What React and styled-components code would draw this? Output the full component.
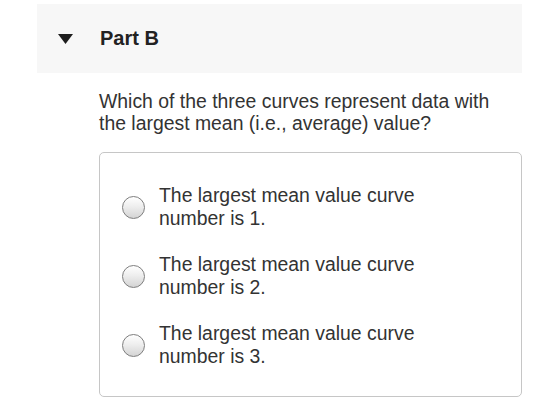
import React from 'react';
import styled, { createGlobalStyle } from 'styled-components';

const GlobalStyle = createGlobalStyle`
  body {
    margin: 0;
    background: #ffffff;
    font-family: "Liberation Sans", Arial, sans-serif;
    color: #333333;
  }
`

const Page = styled.div`
  width: 485px;
  padding: 4px 0 0 37px;
`

const Header = styled.div`
  display: flex;
  align-items: center;
  height: 69px;
  padding-left: 21px;
  background-color: #f7f7f7;
`

const Caret = styled.svg`
  width: 15px;
  height: 10px;
  margin-right: 27px;
  flex-shrink: 0;
`

const Title = styled.h2`
  margin: 0;
  font-size: 20px;
  font-weight: bold;
  color: #222222;
`

const Body = styled.div`
  padding: 18px 0 0 62px;
`

const Question = styled.p`
  max-width: 400px;
  margin: 0 0 18px;
  font-size: 19.4px;
  line-height: 21.5px;
  color: #333333;
`

const Choices = styled.div`
  display: flex;
  flex-direction: column;
  gap: 23px;
  padding: 31px 20px 28px 22px;
  border: 1px solid #c6c6c6;
  border-radius: 5px;
`

const Choice = styled.label`
  display: flex;
  align-items: center;
  cursor: pointer;
`

const Radio = styled.span`
  width: 23px;
  height: 23px;
  box-sizing: border-box;
  margin-right: 14px;
  flex-shrink: 0;
  border-radius: 50%;
  border: 1.5px solid ${props => (props.checked ? '#4a4a4a' : '#7e7e7e')};
  background: linear-gradient(#ffffff, #eeeeee 45%, #d4d4d4);
`

const ChoiceText = styled.span`
  max-width: 285px;
  font-size: 19.4px;
  line-height: 23px;
  color: #333333;
`

const options = [1, 2, 3];

function App() {
  return (
    <Page>
      <GlobalStyle />
      <Header>
        <Caret viewBox="0 0 15 10">
          <polygon points="0,0 15,0 7.5,10" fill="#1e1e1e" />
        </Caret>
        <Title>Part B</Title>
      </Header>
      <Body>
        <Question>
          Which of the three curves represent data with the largest mean (i.e., average) value?
        </Question>
        <Choices>
          {options.map(n => (
            <Choice key={n}>
              <Radio />
              <ChoiceText>The largest mean value curve number is {n}.</ChoiceText>
            </Choice>
          ))}
        </Choices>
      </Body>
    </Page>
  );
}

export default App;
